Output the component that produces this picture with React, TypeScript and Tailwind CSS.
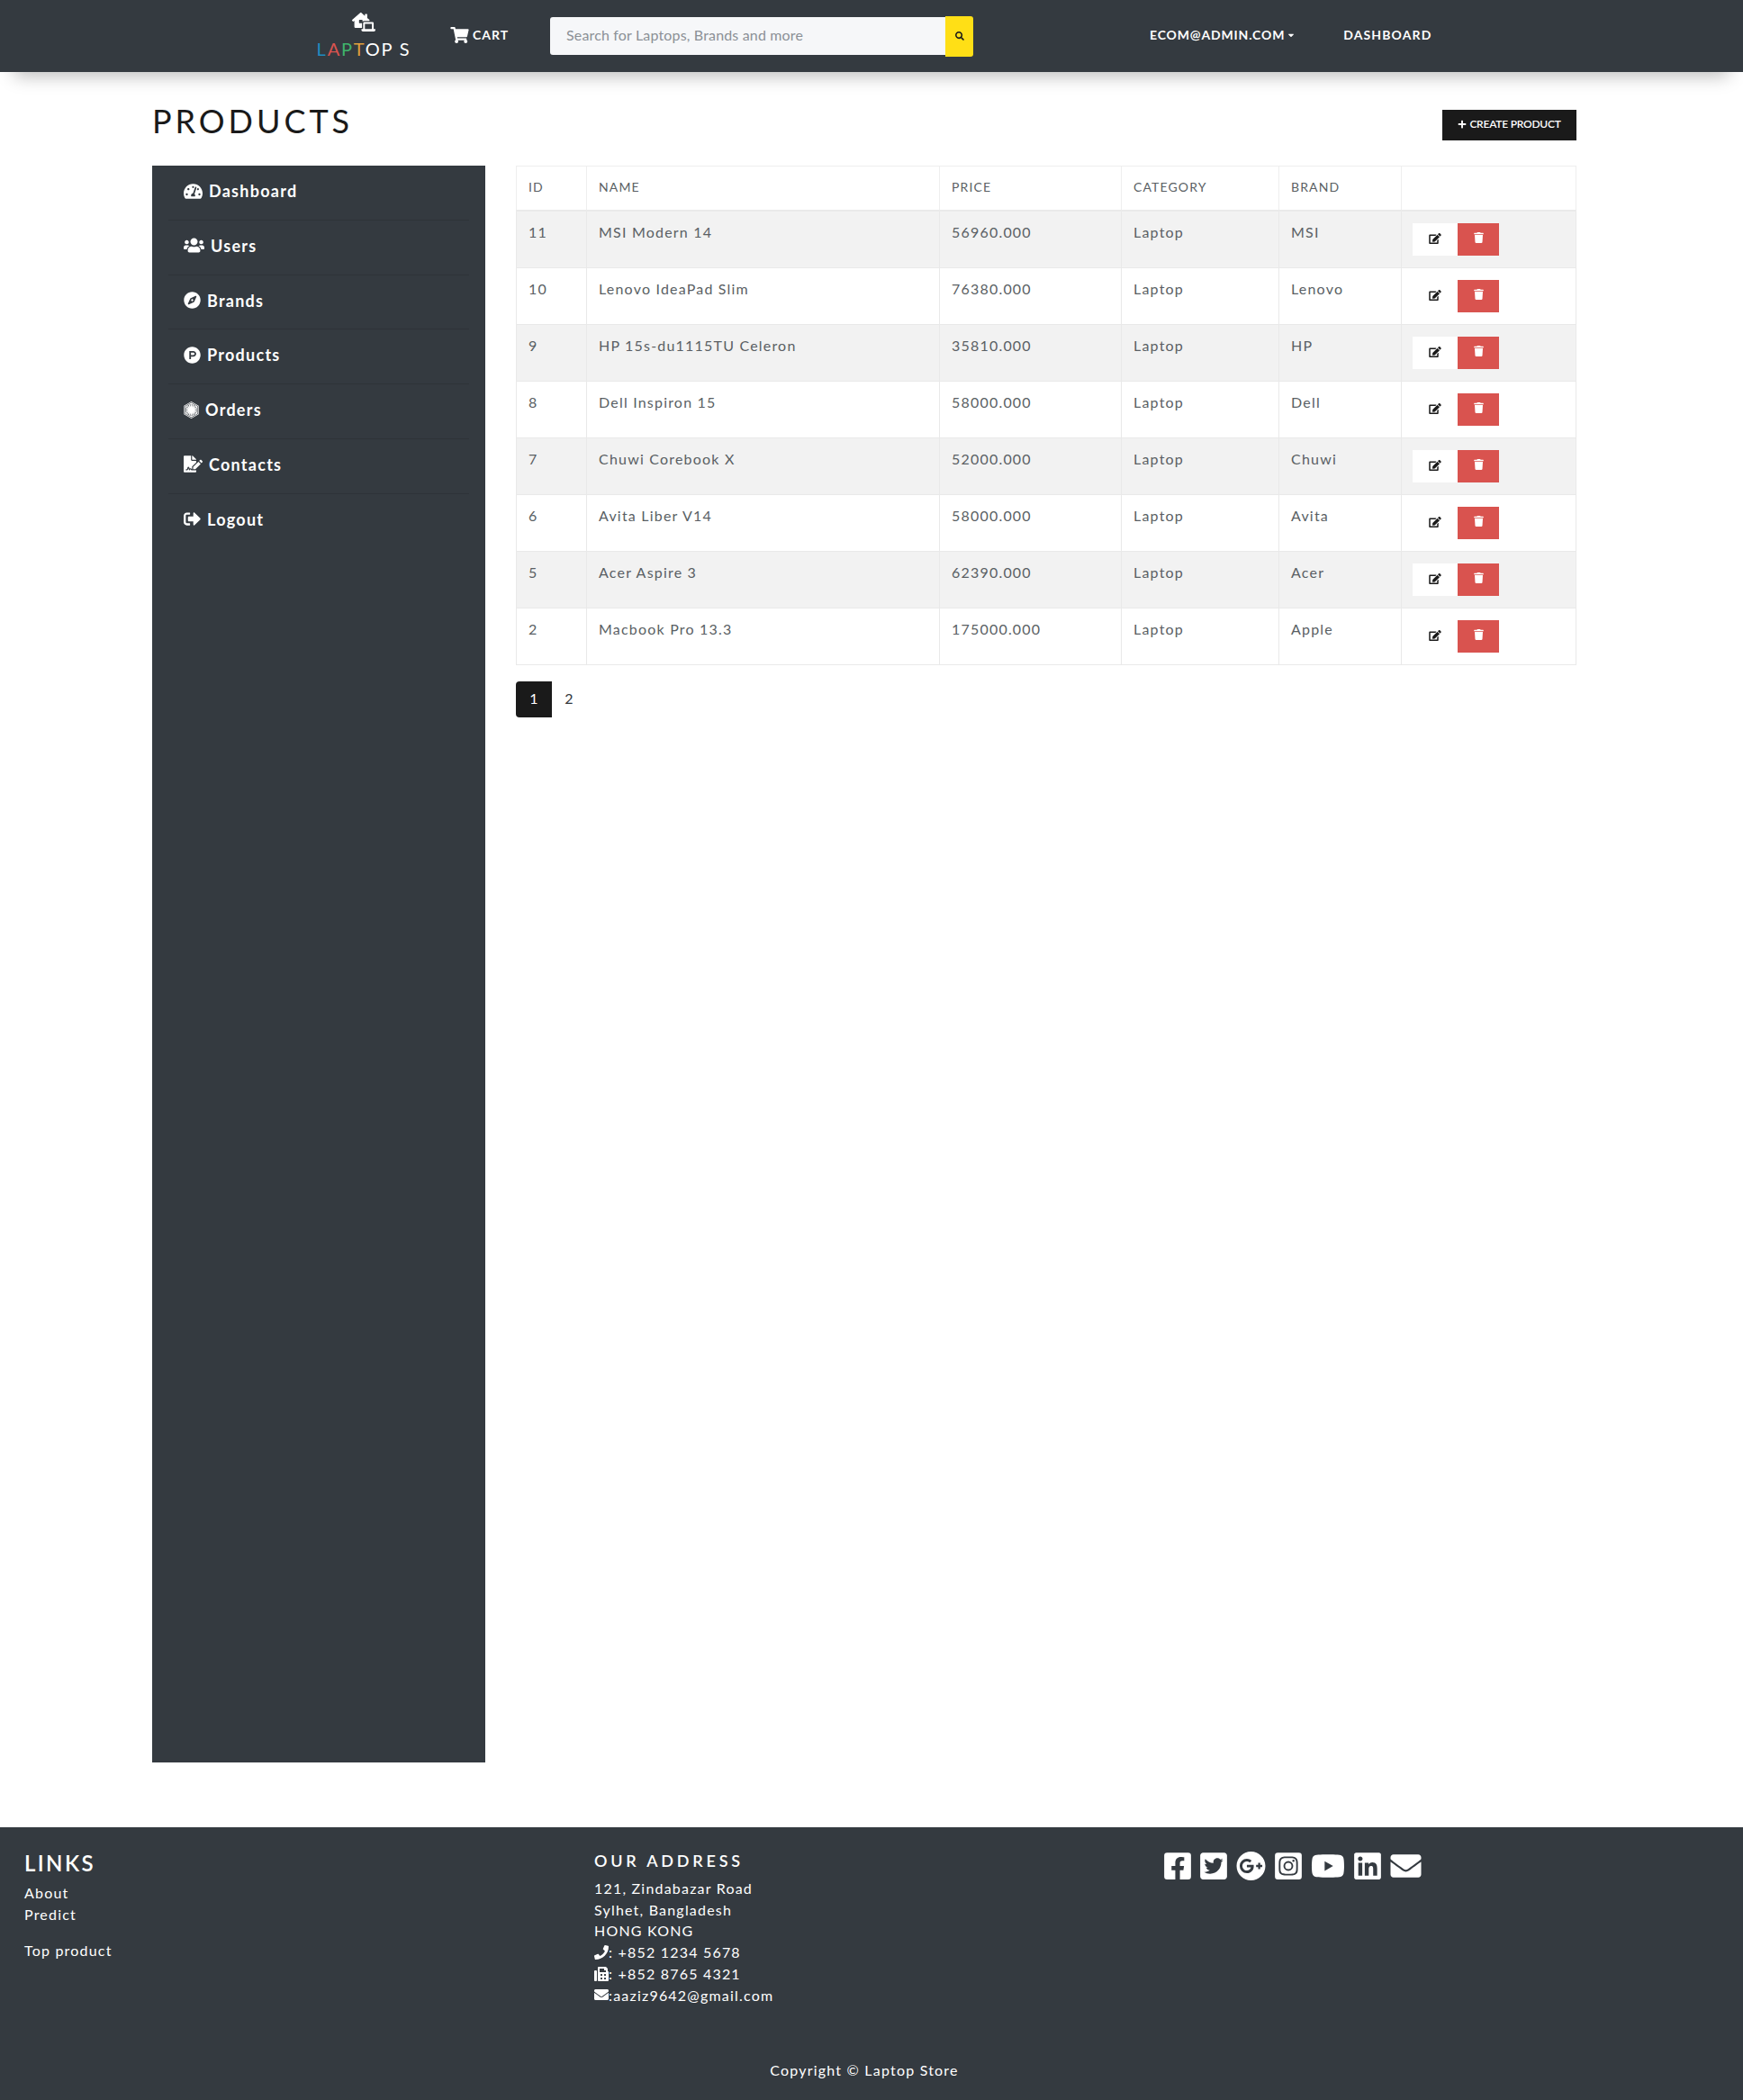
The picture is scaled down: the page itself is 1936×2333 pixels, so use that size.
import {
  FaCaretDown,
  FaEdit,
  FaEnvelope,
  FaFacebookSquare,
  FaFax,
  FaFileSignature,
  FaFirstOrder,
  FaGooglePlus,
  FaInstagramSquare,
  FaLaptopHouse,
  FaLinkedin,
  FaPhone,
  FaPlus,
  FaProductHunt,
  FaSearch,
  FaShoppingCart,
  FaSignOutAlt,
  FaTachometerAlt,
  FaTrash,
  FaTwitterSquare,
  FaUsers,
  FaYoutube,
  FaCompass,
} from "react-icons/fa";

const MENU = [
  { label: "Dashboard", icon: FaTachometerAlt, size: "h-[19px] w-[21px]" },
  { label: "Users", icon: FaUsers, size: "h-[19px] w-[23px]" },
  { label: "Brands", icon: FaCompass, size: "h-[19px] w-[19px]" },
  { label: "Products", icon: FaProductHunt, size: "h-[19px] w-[19px]" },
  { label: "Orders", icon: FaFirstOrder, size: "h-[19px] w-[17px]" },
  { label: "Contacts", icon: FaFileSignature, size: "h-[19px] w-[21px]" },
  { label: "Logout", icon: FaSignOutAlt, size: "h-[19px] w-[19px]" },
];

const PRODUCTS = [
  { id: 11, name: "MSI Modern 14", price: "56960.000", brand: "MSI" },
  { id: 10, name: "Lenovo IdeaPad Slim", price: "76380.000", brand: "Lenovo" },
  { id: 9, name: "HP 15s-du1115TU Celeron", price: "35810.000", brand: "HP" },
  { id: 8, name: "Dell Inspiron 15", price: "58000.000", brand: "Dell" },
  { id: 7, name: "Chuwi Corebook X", price: "52000.000", brand: "Chuwi" },
  { id: 6, name: "Avita Liber V14", price: "58000.000", brand: "Avita" },
  { id: 5, name: "Acer Aspire 3", price: "62390.000", brand: "Acer" },
  { id: 2, name: "Macbook Pro 13.3", price: "175000.000", brand: "Apple" },
];

const HEADERS = ["ID", "NAME", "PRICE", "CATEGORY", "BRAND", ""];

const SOCIALS = [
  { icon: FaFacebookSquare, size: "w-[30px]" },
  { icon: FaTwitterSquare, size: "w-[30px]" },
  { icon: FaGooglePlus, size: "w-[33px]" },
  { icon: FaInstagramSquare, size: "w-[30px]" },
  { icon: FaYoutube, size: "w-[38px]" },
  { icon: FaLinkedin, size: "w-[30px]" },
  { icon: FaEnvelope, size: "w-[35px]" },
];

function Navbar() {
  return (
    <nav className="relative z-10 flex h-20 items-center bg-[#343a40] pl-[353px] text-white shadow-[0_20px_20px_-16px_rgba(0,0,0,0.28)]">
      <div className="flex w-[102px] flex-col items-center">
        <FaLaptopHouse className="h-[21px] w-[26px]" />
        <div className="mt-[7px] text-[20px] leading-[24px] tracking-[0.09em] whitespace-nowrap">
          <span className="text-[#1f8dc1]">L</span>
          <span className="text-[#d9534f]">A</span>
          <span className="text-[#3fb36b]">P</span>
          <span className="text-[#e0a03c]">T</span>
          OP S
        </div>
      </div>
      <a className="mb-[3px] ml-[45px] flex items-center text-[14px] font-bold tracking-[0.07em]">
        <FaShoppingCart className="mr-[4px] h-[18px] w-[21px]" />
        CART
      </a>
      <div className="ml-[46px] flex items-center">
        <div className="flex h-[42px] w-[439px] items-center rounded-l-[3px] bg-[#f6f7f9] pb-[2px] pl-[18px] text-[16px] tracking-[0.01em] text-[#8b9096]">
          Search for Laptops, Brands and more
        </div>
        <button className="flex h-[45px] w-[31px] items-center justify-center rounded-r-[3px] bg-[#ffdf16] text-[#1a1a1a]">
          <FaSearch className="h-[10px] w-[10px]" />
        </button>
      </div>
      <a className="mb-[3px] ml-[196px] flex items-center text-[14px] font-bold tracking-[0.06em]">
        ECOM@ADMIN.COM
        <FaCaretDown className="ml-[3px] h-[10px] w-[8px]" />
      </a>
      <a className="mb-[3px] ml-[54px] text-[14px] font-bold tracking-[0.08em]">DASHBOARD</a>
    </nav>
  );
}

function Sidebar() {
  return (
    <aside className="h-[1774px] w-[370px] shrink-0 bg-[#343a40] px-[18px] text-white">
      <ul>
        {MENU.map(({ label, icon: Icon, size }, i) => (
          <li
            key={label}
            className={`box-border h-[60.8px] pt-[16px] pl-[17px] ${
              i < MENU.length - 1 ? "border-b border-[#2e3338]" : ""
            }`}
          >
            <a className="flex items-center gap-[7px] text-[18px] leading-[24px] font-bold tracking-[0.07em]">
              <Icon className={size} />
              {label}
            </a>
          </li>
        ))}
      </ul>
    </aside>
  );
}

function ProductTable() {
  return (
    <table className="w-[1178px] table-fixed border-collapse text-[16px] tracking-[1.2px] text-[#5a5f64]">
      <colgroup>
        <col className="w-[78px]" />
        <col className="w-[392px]" />
        <col className="w-[202px]" />
        <col className="w-[175px]" />
        <col className="w-[136px]" />
        <col />
      </colgroup>
      <thead>
        <tr className="h-[49px] border-b-2 border-[#eaeaea]">
          {HEADERS.map((h, i) => (
            <th
              key={i}
              className="border border-b-0 border-[#eeeeee] px-[13px] pb-[3px] text-left text-[14px] font-normal tracking-[0.08em]"
            >
              {h}
            </th>
          ))}
        </tr>
      </thead>
      <tbody>
        {PRODUCTS.map((p, i) => (
          <tr key={p.id} className={i % 2 === 0 ? "bg-[#f2f2f2]" : "bg-white"}>
            <td className="border border-[#e9e9e9] px-[13px] pt-[12px] align-top leading-[22px]">{p.id}</td>
            <td className="border border-[#e9e9e9] px-[13px] pt-[12px] align-top leading-[22px]">{p.name}</td>
            <td className="border border-[#e9e9e9] px-[13px] pt-[12px] align-top leading-[22px]">{p.price}</td>
            <td className="border border-[#e9e9e9] px-[13px] pt-[12px] align-top leading-[22px]">Laptop</td>
            <td className="border border-[#e9e9e9] px-[13px] pt-[12px] align-top leading-[22px]">{p.brand}</td>
            <td className="border border-[#e9e9e9] px-[12px] pt-[13px] pb-[13px] align-top">
              <div className="flex">
                <button className="flex h-[36px] w-[50px] items-center justify-center bg-white pb-[2px] text-[#1a1a1a]">
                  <FaEdit className="h-[12px] w-[14px]" />
                </button>
                <button className="flex h-[36px] w-[46px] items-center justify-center bg-[#d9534f] pb-[3px] text-white">
                  <FaTrash className="h-[12px] w-[11px]" />
                </button>
              </div>
            </td>
          </tr>
        ))}
      </tbody>
    </table>
  );
}

function Footer() {
  return (
    <footer className="mt-[72px] h-[303px] bg-[#343a40] text-[16px] tracking-[1.2px] text-white">
      <div className="flex pt-[24px]">
        <div className="w-[660px] pl-[27px]">
          <h4 className="text-[24px] leading-[32px] font-semibold tracking-[0.1em]">LINKS</h4>
          <div className="mt-[5px] leading-[24px]">About</div>
          <div className="leading-[24px]">Predict</div>
          <div className="mt-[16px] leading-[24px]">Top product</div>
        </div>
        <div className="w-[633px]">
          <h5 className="text-[18px] leading-[26px] font-semibold tracking-[0.21em]">OUR ADDRESS</h5>
          <div className="mt-[6px] leading-[23.7px]">
            <div>121, Zindabazar Road</div>
            <div>Sylhet, Bangladesh</div>
            <div>HONG KONG</div>
            <div className="flex items-center">
              <FaPhone className="h-[16px] w-[16px]" />: +852 1234 5678
            </div>
            <div className="flex items-center">
              <FaFax className="h-[16px] w-[16px]" />: +852 8765 4321
            </div>
            <div className="flex items-center">
              <FaEnvelope className="h-[16px] w-[16px]" />:aaziz9642@gmail.com
            </div>
          </div>
        </div>
        <div className="flex h-[38px] items-center gap-[10px]">
          {SOCIALS.map(({ icon: Icon, size }, i) => (
            <Icon key={i} className={`h-[34px] ${size}`} />
          ))}
        </div>
      </div>
      <p className="mt-[60px] pr-[16px] text-center">Copyright © Laptop Store</p>
    </footer>
  );
}

export default function App() {
  return (
    <div className="min-h-[2333px] bg-white font-['Lato','Noto_Sans',sans-serif]">
      <Navbar />
      <main className="pt-[26px] pr-[185px] pl-[169px]">
        <div className="flex h-[78px] items-start justify-between">
          <h1 className="text-[36px] leading-[56px] font-normal tracking-[0.11em] text-[#1a1a1a]">PRODUCTS</h1>
          <button className="mt-[16px] flex h-[34px] w-[149px] items-center justify-center gap-[3px] bg-[#1a1a1a] pb-[2px] text-[12px] font-semibold tracking-[-0.02em] text-white">
            <FaPlus className="h-[10px] w-[10px]" />
            CREATE PRODUCT
          </button>
        </div>
        <div className="flex gap-[34px]">
          <Sidebar />
          <div>
            <ProductTable />
            <div className="mt-[18px] flex text-[16px] text-[#33383d]">
              <a className="flex h-[40px] w-[40px] items-center justify-center rounded-l-[4px] bg-[#1a1a1a] pb-[1px] text-white">1</a>
              <a className="flex h-[40px] w-[38px] items-center justify-center pb-[1px]">2</a>
            </div>
          </div>
        </div>
      </main>
      <Footer />
    </div>
  );
}
